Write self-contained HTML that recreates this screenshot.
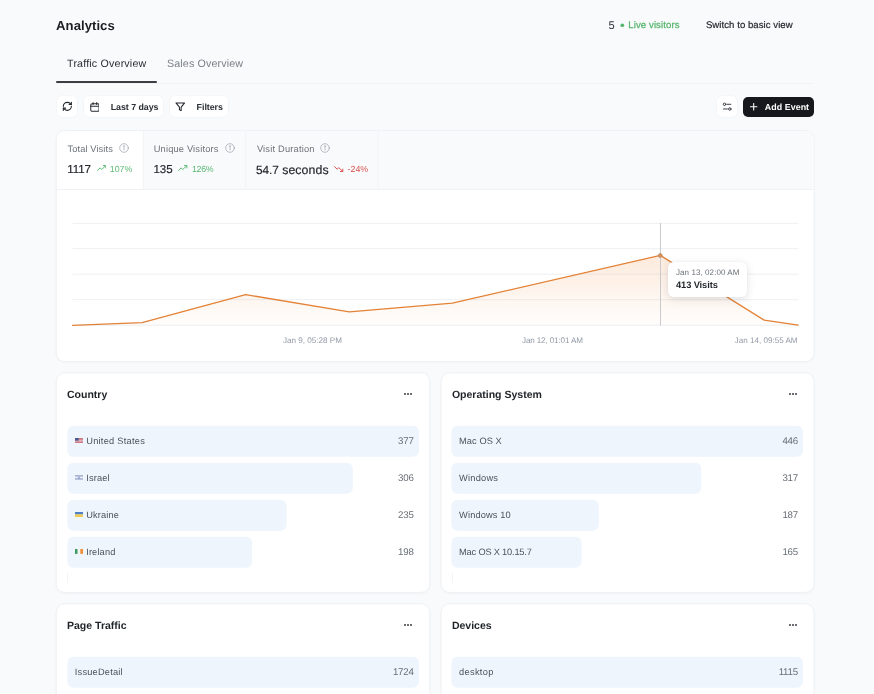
<!DOCTYPE html>
<html>
<head>
<meta charset="utf-8">
<title>Analytics</title>
<style>
*{box-sizing:border-box;margin:0;padding:0}
html,body{text-rendering:geometricPrecision;width:874px;height:694px;overflow:hidden;background:#f9fafb;font-family:"Liberation Sans",sans-serif;color:#1f2328}
#root{position:absolute;left:0;top:0;width:874px;height:694px;will-change:transform}
.abs{position:absolute}
.t{position:absolute;white-space:nowrap;line-height:1}
#title{left:56.1px;top:18.5px;font-size:13.1px;font-weight:bold;color:#1a1d21;letter-spacing:0.05px}
#live5{left:608.4px;top:20.9px;font-size:11.2px;color:#33373d}
#dot{left:620.4px;top:23.5px;width:3.8px;height:3.8px;border-radius:50%;background:#55b56d}
#live{left:628.3px;top:20.7px;font-size:9.6px;color:#55b56d;letter-spacing:0.09px;-webkit-text-stroke:0.25px #55b56d}
#switch{left:705.9px;top:20.7px;font-size:9.6px;color:#24282e;letter-spacing:0.05px;-webkit-text-stroke:0.2px #24282e}
#tab1{left:67.1px;top:58.8px;font-size:10.7px;color:#2a2e34;letter-spacing:0.17px}
#tab2{left:167.0px;top:58.8px;font-size:10.7px;color:#7b8087;letter-spacing:0.13px}
#tabline{left:56px;top:83px;width:758px;height:1px;background:#f2f3f5}
#tabul{left:56.2px;top:81.3px;width:100.5px;height:2px;background:#3a3d43;border-radius:1px}
.btn{position:absolute;top:96.4px;height:20.7px;background:#fff;border-radius:5px;box-shadow:0 0 0 0.6px rgba(20,30,50,0.035)}
  .btn .t{top:7.1px;font-size:8.9px;font-weight:bold;color:#2b2f35;letter-spacing:-0.05px}
#b1{left:56.5px;width:20.6px}
#b2{left:83.9px;width:79.5px}
#b3{left:169.6px;width:58.6px}
#b4{left:716.9px;width:20.3px}
#b5{left:743.4px;width:71.1px;background:#17181b;top:96.6px;height:20.5px;box-shadow:none}
#b5 .t{color:#fff;top:6.5px;letter-spacing:0.05px}
#card{left:57px;top:131px;width:756px;height:229px}
#stats{left:0;top:0;width:756px;height:59px}
.st{position:absolute;top:0;height:58px}
.st .lab{top:13.6px;font-size:9.3px;color:#6d7279}
.st .val{top:34.4px;font-size:11.5px;color:#24282e;letter-spacing:-0.12px;-webkit-text-stroke:0.18px #24282e}
.st .pct{top:34.3px;font-size:8.8px}
.g{color:#5bb974}.r{color:#d9534f}
#tip{left:610.8px;top:131.2px;width:78.8px;height:34.7px;background:#fff;border-radius:5.5px;box-shadow:0 2px 8px rgba(30,40,60,0.13),0 0 1px rgba(30,40,60,0.12)}
.card2{position:absolute;overflow:hidden}
.card2 .h{left:10.0px;top:15.8px;font-size:10.55px;font-weight:bold;color:#1f2328;letter-spacing:-0.02px}
.dots{position:absolute;left:347.3px;top:18.9px;width:9px;height:2px}
.dots i{position:absolute;top:0;width:2px;height:2px;border-radius:50%;background:#3b3f46}
.dots i:nth-child(1){left:0}.dots i:nth-child(2){left:3.1px}.dots i:nth-child(3){left:6.2px}
.flag{position:absolute;left:18.3px;line-height:0}
.bar{position:absolute;left:10.4px;height:30.9px;background:#eef5fd;border-radius:6px}
.bl{position:absolute;font-size:9.25px;color:#4d525a;white-space:nowrap;line-height:1;letter-spacing:0.14px}
.bv{position:absolute;right:15.4px;font-size:9.7px;color:#6a6f76;white-space:nowrap;line-height:1;text-align:right;letter-spacing:-0.22px;margin-top:0.4px}
</style>
</head>
<body>
<div id="root">
<svg class="abs" id="bg" style="left:0;top:0" width="874" height="694" viewBox="0 0 874 694">
  <defs>
    <clipPath id="mc"><rect x="56.2" y="130.4" width="757.8" height="231.2" rx="8.5"/></clipPath>
    <filter id="sh" x="-5%" y="-5%" width="110%" height="115%"><feGaussianBlur stdDeviation="1.6"/></filter>
  </defs>
  <g fill="#1a2233" opacity="0.035" filter="url(#sh)">
    <rect x="56.2" y="131.4" width="757.8" height="230.9" rx="8.5"/>
    <rect x="56.2" y="373.8" width="373.6" height="219.6" rx="8.5"/>
    <rect x="441.1" y="373.8" width="372.9" height="219.6" rx="8.5"/>
    <rect x="56.2" y="604.8" width="373.6" height="120" rx="8.5"/>
    <rect x="441.1" y="604.8" width="372.9" height="120" rx="8.5"/>
  </g>
  <g fill="#fff" stroke="#eef0f3" stroke-width="1">
    <rect x="56.2" y="130.4" width="757.8" height="231.2" rx="8.5"/>
    <rect x="56.2" y="372.8" width="373.6" height="219.6" rx="8.5"/>
    <rect x="441.1" y="372.8" width="372.9" height="219.6" rx="8.5"/>
    <rect x="56.2" y="603.8" width="373.6" height="120" rx="8.5"/>
    <rect x="441.1" y="603.8" width="372.9" height="120" rx="8.5"/>
  </g>
  <g clip-path="url(#mc)">
    <rect x="142.9" y="130.9" width="672" height="58.4" fill="#f9fafb"/>
    <path d="M56.7 189.4H813.5" stroke="#eff1f4" stroke-width="1"/>
    <path d="M143.3 130.9V189M245.6 130.9V189M378.1 130.9V189" stroke="#f2f3f6" stroke-width="1"/>
  </g>
</svg>
<div class="t" id="title">Analytics</div>
<div class="t" id="live5">5</div>
<svg class="abs" style="left:618px;top:21px" width="9" height="9" viewBox="618 21 9 9"><circle cx="622.3" cy="25.25" r="1.85" fill="#55b56d"/></svg>
<div class="t" id="live">Live visitors</div>
<div class="t" id="switch">Switch to basic view</div>
<div class="t" id="tab1">Traffic Overview</div>
<div class="t" id="tab2">Sales Overview</div>
<div class="abs" id="tabline"></div>
<div class="abs" id="tabul"></div>

<div class="btn" id="b1">
  <svg class="abs" style="left:5.5px;top:5.1px" width="10.7" height="10.7" viewBox="0 0 24 24" fill="none" stroke="#24282e" stroke-width="2.5" stroke-linecap="round" stroke-linejoin="round"><path d="M3 12a9 9 0 0 1 9-9 9.75 9.75 0 0 1 6.74 2.74L21 8"/><path d="M21 3v5h-5"/><path d="M21 12a9 9 0 0 1-9 9 9.75 9.75 0 0 1-6.74-2.74L3 16"/><path d="M8 16H3v5"/></svg>
</div>
<div class="btn" id="b2">
  <svg class="abs" style="left:5.7px;top:5.2px" width="9.8" height="10" viewBox="0 0 20.4 20.8" fill="none" stroke="#24282e" stroke-width="2.1" stroke-linecap="round" stroke-linejoin="round"><rect x="1.6" y="3.4" width="17.2" height="16" rx="3"/><path d="M1.6 8.8h17.2M6.4 1.2v4M14 1.2v4"/></svg>
  <div class="t" style="left:26.8px">Last 7 days</div>
</div>
<div class="btn" id="b3">
  <svg class="abs" style="left:5.4px;top:5.3px" width="10.6" height="9.6" viewBox="0 0 22 20" fill="none" stroke="#24282e" stroke-width="2.2" stroke-linecap="round" stroke-linejoin="round"><path d="M2 2h18L12.8 10.6V18.4l-3.6-2.4v-5.4z"/></svg>
  <div class="t" style="left:27.0px">Filters</div>
</div>
<div class="btn" id="b4">
  <svg class="abs" style="left:0;top:0" width="20.3" height="20.7" viewBox="0 0 20.3 20.7" fill="none" stroke="#33373e" stroke-width="0.95" stroke-linecap="round"><circle cx="7.5" cy="8.3" r="1.25"/><path d="M9.9 8.3h3.9"/><circle cx="12.8" cy="13" r="1.25"/><path d="M6.5 13h3.9"/></svg>
</div>
<div class="btn" id="b5">
  <svg class="abs" style="left:6.8px;top:6.7px" width="7.4" height="7.4" viewBox="0 0 8 8" fill="none" stroke="#fff" stroke-width="1.15" stroke-linecap="round"><path d="M4 0.5v7M0.5 4h7"/></svg>
  <div class="t" style="left:21.4px">Add Event</div>
</div>

<div class="abs" id="card">
  <div class="abs" id="stats">
    <div class="st" style="left:0;width:86.4px">
      <div class="t lab" style="left:10.5px;letter-spacing:0.1px">Total Visits</div>
      <svg class="abs" style="left:62.3px;top:12.4px" width="10" height="10" viewBox="0 0 20 20" fill="none" stroke="#959dab" stroke-width="1.35" stroke-linecap="round"><circle cx="10" cy="10" r="8.6"/><path d="M10 9.3v4.6"/><circle cx="10" cy="6.2" r="0.6" fill="#959dab"/></svg>
      <div class="t val" style="left:10.3px">1117</div>
      <svg class="abs" style="left:39.6px;top:34.3px" width="9.6" height="6.1" viewBox="0 0 20 12.8" fill="none" stroke="#5bb974" stroke-width="2.1" stroke-linecap="round" stroke-linejoin="round"><path d="M1 11.5l5.5-5.5 3.5 3.5 8-8"/><path d="M13.5 1.2h5v5"/></svg>
      <div class="t pct g" style="left:52.8px">107%</div>
    </div>
    <div class="st" style="left:86.6px;width:102.4px">
      <div class="t lab" style="left:10.1px;letter-spacing:0.17px">Unique Visitors</div>
      <svg class="abs" style="left:81.0px;top:12.4px" width="10" height="10" viewBox="0 0 20 20" fill="none" stroke="#959dab" stroke-width="1.35" stroke-linecap="round"><circle cx="10" cy="10" r="8.6"/><path d="M10 9.3v4.6"/><circle cx="10" cy="6.2" r="0.6" fill="#959dab"/></svg>
      <div class="t val" style="left:10.0px">135</div>
      <svg class="abs" style="left:34.8px;top:34.3px" width="9.6" height="6.1" viewBox="0 0 20 12.8" fill="none" stroke="#5bb974" stroke-width="2.1" stroke-linecap="round" stroke-linejoin="round"><path d="M1 11.5l5.5-5.5 3.5 3.5 8-8"/><path d="M13.5 1.2h5v5"/></svg>
      <div class="t pct g" style="left:48.4px;letter-spacing:-0.3px">126%</div>
    </div>
    <div class="st" style="left:189px;width:132.6px">
      <div class="t lab" style="left:10.9px;letter-spacing:0.19px">Visit Duration</div>
      <svg class="abs" style="left:74.4px;top:12.4px" width="10" height="10" viewBox="0 0 20 20" fill="none" stroke="#959dab" stroke-width="1.35" stroke-linecap="round"><circle cx="10" cy="10" r="8.6"/><path d="M10 9.3v4.6"/><circle cx="10" cy="6.2" r="0.6" fill="#959dab"/></svg>
      <div class="t val" style="left:9.9px;top:33.9px;line-height:11.5px"><span style="line-height:11.5px;font-size:11.8px;letter-spacing:-0.05px">54.7</span><span style="line-height:11.5px;font-size:12.3px;letter-spacing:0.1px"> seconds</span></div>
      <svg class="abs" style="left:88.4px;top:34.5px" width="9.6" height="6.1" viewBox="0 0 20 12.8" fill="none" stroke="#d9534f" stroke-width="2.1" stroke-linecap="round" stroke-linejoin="round"><path d="M1 1.3l5.5 5.5 3.5-3.5 8 8"/><path d="M13.5 11.6h5v-5"/></svg>
      <div class="t pct r" style="left:101.6px">-24%</div>
    </div>
  </div>
  <svg class="abs" style="left:0;top:59px" width="756" height="170" viewBox="57 190 756 170">
    <defs>
      <linearGradient id="ag" x1="0" y1="255" x2="0" y2="325" gradientUnits="userSpaceOnUse">
        <stop offset="0" stop-color="#f08a3c" stop-opacity="0.18"/>
        <stop offset="1" stop-color="#f08a3c" stop-opacity="0.015"/>
      </linearGradient>
    </defs>
    <g stroke="#edeff2" stroke-width="1">
      <path d="M72.5 223.3H798.6M72.5 248.7H798.6M72.5 274.2H798.6M72.5 299.7H798.6M72.5 325.2H798.6"/>
    </g>
    <path d="M72.6 325.3L142.1 322.6L245.6 294.6L349.3 311.8L452.4 303.2L660.3 255.4L764.2 320.1L798.2 325.1V325.5H72.6Z" fill="url(#ag)"/>
    <path d="M660.5 223V325.5" stroke="#c9cacd" stroke-width="1"/>
    <path d="M72.6 325.3L142.1 322.6L245.6 294.6L349.3 311.8L452.4 303.2L660.3 255.4L764.2 320.1L798.2 325.1" fill="none" stroke="#e38236" stroke-width="1.3" stroke-linejoin="round" stroke-linecap="round"/>
    <circle cx="660.3" cy="255.5" r="1.9" fill="#ec8c40" stroke="#ab9486" stroke-width="0.9"/>
    <g font-family="Liberation Sans, sans-serif" font-size="8.1" fill="#9299a5">
      <text x="312.5" y="343.1" text-anchor="middle">Jan 9, 05:28 PM</text>
      <text x="552.4" y="343.1" text-anchor="middle" letter-spacing="-0.14">Jan 12, 01:01 AM</text>
      <text x="797.6" y="343.1" text-anchor="end">Jan 14, 09:55 AM</text>
    </g>
  </svg>
  <div class="abs" id="tip">
    <div class="t" style="left:8.2px;top:6.6px;font-size:8px;color:#6b7179;letter-spacing:0.08px">Jan 13, 02:00 AM</div>
    <div class="t" style="left:8.2px;top:19px;font-size:9.3px;font-weight:bold;color:#1f2328;letter-spacing:-0.1px">413 Visits</div>
  </div>
</div>

<div class="card2" style="left:57px;top:374px;width:372px;height:218px">
  <div class="t h">Country</div>
  <div class="dots"><i></i><i></i><i></i></div>
  <svg class="abs" style="left:0;top:51px" width="372" height="33" viewBox="0 0 372 33"><rect x="10.4" y="0.70" width="351.6" height="31.1" rx="6" fill="#eef5fd"/></svg>
  <div class="flag" style="top:64.2px"><svg width="8" height="4.9" viewBox="0 0 16 11" preserveAspectRatio="none"><rect width="16" height="11" fill="#e9e6ea"/><g fill="#c8505a"><rect y="0" width="16" height="1.6"/><rect y="3.1" width="16" height="1.6"/><rect y="6.2" width="16" height="1.6"/><rect y="9.4" width="16" height="1.6"/></g><rect width="7.5" height="6" fill="#4a5a92"/></svg></div>
  <div class="bl" style="left:29.2px;top:62.8px" ><span style="letter-spacing:0.26px">United States</span></div>
  <div class="bv" style="top:62.8px">377</div>
  <svg class="abs" style="left:0;top:88px" width="372" height="33" viewBox="0 0 372 33"><rect x="10.4" y="0.70" width="285.4" height="31.1" rx="6" fill="#eef5fd"/></svg>
  <div class="flag" style="top:101.2px"><svg width="8" height="4.9" viewBox="0 0 16 11" preserveAspectRatio="none"><rect width="16" height="11" fill="#eef0f6"/><rect y="1.2" width="16" height="1.7" fill="#5a6fb0"/><rect y="8.1" width="16" height="1.7" fill="#5a6fb0"/><path d="M8 3.6l2 3.4h-4z" fill="none" stroke="#5a6fb0" stroke-width="0.9"/></svg></div>
  <div class="bl" style="left:29.2px;top:99.8px">Israel</div>
  <div class="bv" style="top:99.8px">306</div>
  <svg class="abs" style="left:0;top:125px" width="372" height="33" viewBox="0 0 372 33"><rect x="10.4" y="0.70" width="219.2" height="31.1" rx="6" fill="#eef5fd"/></svg>
  <div class="flag" style="top:138.2px"><svg width="8" height="4.9" viewBox="0 0 16 11" preserveAspectRatio="none"><rect width="16" height="5.5" fill="#4f7fc4"/><rect y="5.5" width="16" height="5.5" fill="#eec84a"/></svg></div>
  <div class="bl" style="left:29.2px;top:136.8px">Ukraine</div>
  <div class="bv" style="top:136.8px">235</div>
  <svg class="abs" style="left:0;top:162px" width="372" height="33" viewBox="0 0 372 33"><rect x="10.4" y="0.70" width="184.7" height="31.1" rx="6" fill="#eef5fd"/></svg>
  <div class="flag" style="top:175.2px"><svg width="8" height="4.9" viewBox="0 0 16 11" preserveAspectRatio="none"><rect width="5.4" height="11" fill="#3f9a62"/><rect x="5.4" width="5.2" height="11" fill="#f4f4f2"/><rect x="10.6" width="5.4" height="11" fill="#ef8f3c"/></svg></div>
  <div class="bl" style="left:29.2px;top:173.8px">Ireland</div>
  <div class="bv" style="top:173.8px">198</div>
  <div class="abs" style="left:10.4px;top:198.6px;width:1px;height:10px;background:#f1f3f6"></div>
</div>
<div class="card2" style="left:441.3px;top:374px;width:372px;height:218px">
  <div class="t h" style="left:10.6px">Operating System</div>
  <div class="dots"><i></i><i></i><i></i></div>
  <svg class="abs" style="left:0;top:51px" width="372" height="33" viewBox="0 0 372 33"><rect x="10.4" y="0.70" width="351.6" height="31.1" rx="6" fill="#eef5fd"/></svg>
  <div class="bl" style="left:17.8px;top:62.8px"><span style="letter-spacing:0.06px">Mac OS X</span></div>
  <div class="bv" style="top:62.8px">446</div>
  <svg class="abs" style="left:0;top:88px" width="372" height="33" viewBox="0 0 372 33"><rect x="10.4" y="0.70" width="249.9" height="31.1" rx="6" fill="#eef5fd"/></svg>
  <div class="bl" style="left:17.8px;top:99.8px"><span style="letter-spacing:0.22px">Windows</span></div>
  <div class="bv" style="top:99.8px">317</div>
  <svg class="abs" style="left:0;top:125px" width="372" height="33" viewBox="0 0 372 33"><rect x="10.4" y="0.70" width="147.4" height="31.1" rx="6" fill="#eef5fd"/></svg>
  <div class="bl" style="left:17.8px;top:136.8px">Windows 10</div>
  <div class="bv" style="top:136.8px">187</div>
  <svg class="abs" style="left:0;top:162px" width="372" height="33" viewBox="0 0 372 33"><rect x="10.4" y="0.70" width="130.1" height="31.1" rx="6" fill="#eef5fd"/></svg>
  <div class="bl" style="left:17.8px;top:173.8px"><span style="letter-spacing:-0.19px">Mac OS X 10.15.7</span></div>
  <div class="bv" style="top:173.8px">165</div>
  <div class="abs" style="left:10.4px;top:198.6px;width:1px;height:10px;background:#f1f3f6"></div>
</div>
<div class="card2" style="left:57px;top:605px;width:372px;height:89px">
  <div class="t h">Page Traffic</div>
  <div class="dots"><i></i><i></i><i></i></div>
  <svg class="abs" style="left:0;top:51px" width="372" height="33" viewBox="0 0 372 33"><rect x="10.4" y="0.70" width="351.6" height="31.1" rx="6" fill="#eef5fd"/></svg>
  <svg class="abs" style="left:0;top:88px" width="372" height="33" viewBox="0 0 372 33"><rect x="10.4" y="0.7" width="221.6" height="31.1" rx="6" fill="#eef5fd"/></svg>
  <div class="bl" style="left:17.8px;top:62.8px"><span style="letter-spacing:0.21px">IssueDetail</span></div>
  <div class="bv" style="top:62.8px">1724</div>
</div>
<div class="card2" style="left:441.3px;top:605px;width:372px;height:89px">
  <div class="t h" style="left:10.6px">Devices</div>
  <div class="dots"><i></i><i></i><i></i></div>
  <svg class="abs" style="left:0;top:51px" width="372" height="33" viewBox="0 0 372 33"><rect x="10.4" y="0.70" width="351.6" height="31.1" rx="6" fill="#eef5fd"/></svg>
  <div class="bl" style="left:17.8px;top:62.8px"><span style="letter-spacing:0.3px">desktop</span></div>
  <div class="bv" style="top:62.8px">1115</div>
</div>
</div>
</body>
</html>
